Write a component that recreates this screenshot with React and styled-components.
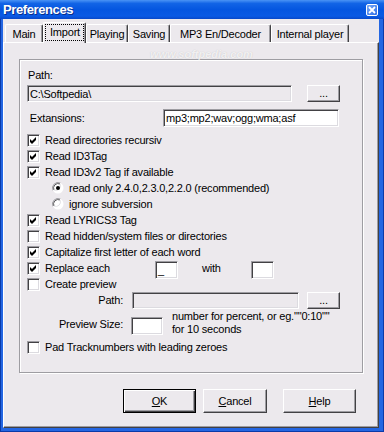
import React from "react";
import styled, { createGlobalStyle, css } from "styled-components";

const FACE = "#ECE9ED";
const SHADOW = "#9e9da2";
const DARK = "#424144";

const GlobalStyle = createGlobalStyle`
  html, body { margin: 0; padding: 0; background: #fff; }
  body {
    font-family: "Liberation Sans", Arial, sans-serif;
    font-size: 11px;
    letter-spacing: -0.2px;
    color: #000;
  }
  * { box-sizing: border-box; }
`;

// Window frame
const Window = styled.div`
  width: 384px;
  height: 432px;
  display: flex;
  flex-direction: column;
  background: #2466e2;
  box-shadow: inset 0 0 0 1px #0b3aa8;
`;

const TitleBar = styled.div`
  height: 19px;
  flex: none;
  display: flex;
  align-items: center;
  justify-content: space-between;
  padding: 0 6px 0 3px;
  background: linear-gradient(180deg, #4a93f5 0%, #1264e6 18%, #0556e0 50%, #0a5ae4 85%, #0848c9 100%);
`;

const Title = styled.span`
  color: #fff;
  font-weight: bold;
  font-size: 13px;
  letter-spacing: -0.4px;
  text-shadow: 1px 1px 0 #0a2f8a;
`;

const CloseButton = styled.div`
  width: 12px;
  height: 12px;
  border: 1px solid #fff;
  border-radius: 2px;
  background: linear-gradient(135deg, #7aaaf6, #2c6ce8);
  display: flex;
  align-items: center;
  justify-content: center;
`;

const Client = styled.div`
  flex: 1;
  margin: 0 5px 4px 3px;
  background: ${FACE};
  display: flex;
  flex-direction: column;
  padding-top: 3px;
`;

// Tabs
const TabStrip = styled.div`
  height: 20px;
  flex: none;
  display: flex;
  align-items: flex-end;
  padding-left: 2px;
  position: relative;
  z-index: 2;
`;

const Tab = styled.div`
  width: ${(p) => p.$w}px;
  height: 18px;
  display: flex;
  align-items: center;
  justify-content: center;
  background: ${FACE};
  border-top: 1px solid #fff;
  border-left: 1px solid #fff;
  border-right: 1px solid ${DARK};
  border-radius: 2px 2px 0 0;
  box-shadow: inset -1px 0 0 ${SHADOW};
  ${(p) =>
    p.$active &&
    css`
      height: 21px;
      margin-bottom: -1px;
      padding-bottom: 2px;
    `}
`;

const FocusLabel = styled.span`
  outline: 1px dotted #000;
  outline-offset: 0;
  padding: 1px 3px 1px 4px;
  line-height: 13px;
`;

const Panel = styled.div`
  flex: 1;
  position: relative;
  border-top: 1px solid #fff;
  border-left: 1px solid #fff;
  border-right: 1px solid ${DARK};
  border-bottom: 1px solid ${DARK};
  box-shadow: inset -1px -1px 0 ${SHADOW};
  padding: 16px 0 0 15px;
`;

const Watermark = styled.span`
  position: absolute;
  left: 146px;
  top: 5px;
  font-size: 11px;
  font-weight: bold;
  font-style: italic;
  color: rgba(255, 255, 255, 0.75);
  text-shadow: 0 0 1px rgba(0, 0, 0, 0.18);
  letter-spacing: 0;
`;

// Group box
const Group = styled.div`
  width: 344px;
  height: 314px;
  border: 1px solid ${SHADOW};
  box-shadow: inset 1px 1px 0 #fff, 1px 1px 0 #fff;
  padding: 9px 0 0 7px;
  display: flex;
  flex-direction: column;
`;

const Label = styled.div`
  height: 13px;
  line-height: 13px;
  padding-left: 1px;
`;

const Row = styled.div`
  display: flex;
  align-items: center;
  flex: none;
  height: ${(p) => p.$h || 16}px;
  margin-top: ${(p) => p.$mt || 0}px;
  padding-left: ${(p) => p.$pl || 0}px;
`;

const sunken = css`
  border: 1px solid;
  border-color: ${SHADOW} #fff #fff ${SHADOW};
  box-shadow: inset 1px 1px 0 ${DARK}, inset -1px -1px 0 #dcdbe0;
`;

const Field = styled.div`
  ${sunken};
  flex: none;
  width: ${(p) => p.$w}px;
  height: ${(p) => p.$h || 17}px;
  margin-left: ${(p) => p.$ml || 0}px;
  margin-top: ${(p) => p.$mt || 0}px;
  align-self: ${(p) => (p.$top ? "flex-start" : "auto")};
  background: ${(p) => (p.$white ? "#fff" : FACE)};
  display: flex;
  align-items: center;
  padding-left: 2px;
  white-space: nowrap;
  overflow: hidden;
`;

const raised = css`
  border: 1px solid;
  border-color: #fff ${DARK} ${DARK} #fff;
  box-shadow: inset -1px -1px 0 ${SHADOW};
`;

const SmallButton = styled.div`
  ${raised};
  flex: none;
  width: 33px;
  height: 17px;
  margin-left: ${(p) => p.$ml}px;
  display: flex;
  align-items: center;
  justify-content: center;
  padding-bottom: 2px;
`;

const Text = styled.span`
  flex: none;
  width: ${(p) => (p.$w ? `${p.$w}px` : "auto")};
  margin-left: ${(p) => p.$ml || 0}px;
  white-space: nowrap;
`;

const SideLabel = styled.span`
  flex: none;
  width: 97px;
  text-align: right;
  padding-right: 1px;
  height: ${(p) => p.$h || 16}px;
  line-height: ${(p) => p.$h || 16}px;
  margin-top: ${(p) => p.$mt || 0}px;
`;

const Hint = styled.div`
  margin-left: 9px;
  line-height: 12.5px;
  white-space: nowrap;
`;

const Box = styled.span`
  ${sunken};
  flex: none;
  width: 13px;
  height: 13px;
  margin-right: 5px;
  background: #fff;
  display: flex;
  align-items: center;
  justify-content: center;
`;

const Check = ({ checked, children }) => (
  <Row>
    <Box>
      {checked && (
        <svg width="9" height="9" viewBox="0 0 9 9">
          <polygon points="1,3 3,5 7,1 7,4 3,8 1,6" fill="#000" />
        </svg>
      )}
    </Box>
    {children}
  </Row>
);

const RadioMark = styled.svg`
  flex: none;
  margin-right: 5px;
`;

const Radio = ({ checked, children }) => (
  <Row $pl={25}>
    <RadioMark width="12" height="12" viewBox="0 0 12 12">
      <circle cx="6" cy="6" r="5.5" fill="#fff" />
      <path d="M1.1 8.5 A5.5 5.5 0 0 1 8.5 1.1" stroke="#9a999e" strokeWidth="1" fill="none" />
      <path d="M8.5 1.1 A5.5 5.5 0 0 1 1.1 8.5" stroke="#fff" strokeWidth="1" fill="none" />
      <path d="M2 8 A4.5 4.5 0 0 1 8 2" stroke="#5a595c" strokeWidth="1" fill="none" />
      <path d="M8 2 A4.5 4.5 0 0 1 2 8" stroke="#e0dfe3" strokeWidth="1" fill="none" />
      {checked && <circle cx="6" cy="6" r="2" fill="#000" />}
    </RadioMark>
    {children}
  </Row>
);

// Bottom buttons
const ButtonRow = styled.div`
  display: flex;
  margin-top: 16px;
  padding-left: 104px;
`;

const Button = styled.div`
  ${raised};
  width: ${(p) => p.$w}px;
  height: 24px;
  margin-left: ${(p) => p.$ml || 0}px;
  display: flex;
  align-items: center;
  justify-content: center;
  padding-bottom: 1px;
  ${(p) =>
    p.$default &&
    css`
      border: 1px solid #000;
      box-shadow: inset 1px 1px 0 #fff, inset -1px -1px 0 ${DARK}, inset -2px -2px 0 ${SHADOW};
    `}
`;

const tabs = [
  { label: "Main", w: 38 },
  { label: "Import", w: 43, active: true },
  { label: "Playing", w: 42 },
  { label: "Saving", w: 42 },
  { label: "MP3 En/Decoder", w: 101 },
  { label: "Internal player", w: 78 },
];

export default function App() {
  return (
    <>
      <GlobalStyle />
      <Window>
        <TitleBar>
          <Title>Preferences</Title>
          <CloseButton>
            <svg width="8" height="8" viewBox="0 0 8 8">
              <path d="M1 1 L7 7 M7 1 L1 7" stroke="#fff" strokeWidth="1.8" />
            </svg>
          </CloseButton>
        </TitleBar>
        <Client>
          <TabStrip>
            {tabs.map((t) => (
              <Tab key={t.label} $w={t.w} $active={t.active}>
                {t.active ? <FocusLabel>{t.label}</FocusLabel> : t.label}
              </Tab>
            ))}
          </TabStrip>
          <Panel>
            <Watermark>www.softpedia.com</Watermark>
            <Group>
              <Label>Path:</Label>
              <Row $h={17} $mt={3}>
                <Field $w={265}>C:\Softpedia\</Field>
                <SmallButton $ml={15}>...</SmallButton>
              </Row>
              <Row $h={18} $mt={7}>
                <Text $w={136}>&nbsp;Extansions:</Text>
                <Field $w={176} $h={18} $white>
                  mp3;mp2;wav;ogg;wma;asf
                </Field>
              </Row>
              <Row $h={5} />
              <Check checked>Read directories recursiv</Check>
              <Check checked>Read ID3Tag</Check>
              <Check checked>Read ID3v2 Tag if available</Check>
              <Radio checked>read only 2.4.0,2.3.0,2.2.0 (recommended)</Radio>
              <Radio>ignore subversion</Radio>
              <Check checked>Read LYRICS3 Tag</Check>
              <Check>Read hidden/system files or directories</Check>
              <Check checked>Capitalize first letter of each word</Check>
              <Check checked>
                <Text $w={110}>Replace each</Text>
                <Field $w={23} $h={18} $top $mt={1} $white>
                  _
                </Field>
                <Text $ml={24}>with</Text>
                <Field $w={23} $h={18} $top $mt={1} $ml={30} $white />
              </Check>
              <Check>Create preview</Check>
              <Row $h={17}>
                <SideLabel $h={17}>Path:</SideLabel>
                <Field $w={167} $ml={8} />
                <SmallButton $ml={8}>...</SmallButton>
              </Row>
              <Row $h={26} $mt={1} style={{ alignItems: "flex-start" }}>
                <SideLabel $h={18} $mt={5}>Preview Size:</SideLabel>
                <Field $w={32} $h={18} $ml={7} $mt={7} $white />
                <Hint>
                  number for percent, or eg.""0:10""
                  <br />
                  for 10 seconds
                </Hint>
              </Row>
              <Row $h={3} />
              <Check>Pad Tracknumbers with leading zeroes</Check>
            </Group>
            <ButtonRow>
              <Button $w={73} $default>
                <span>
                  <u>O</u>K
                </span>
              </Button>
              <Button $w={64} $ml={7}>
                <span>
                  <u>C</u>ancel
                </span>
              </Button>
              <Button $w={73} $ml={16}>
                <span>
                  <u>H</u>elp
                </span>
              </Button>
            </ButtonRow>
          </Panel>
        </Client>
      </Window>
    </>
  );
}
